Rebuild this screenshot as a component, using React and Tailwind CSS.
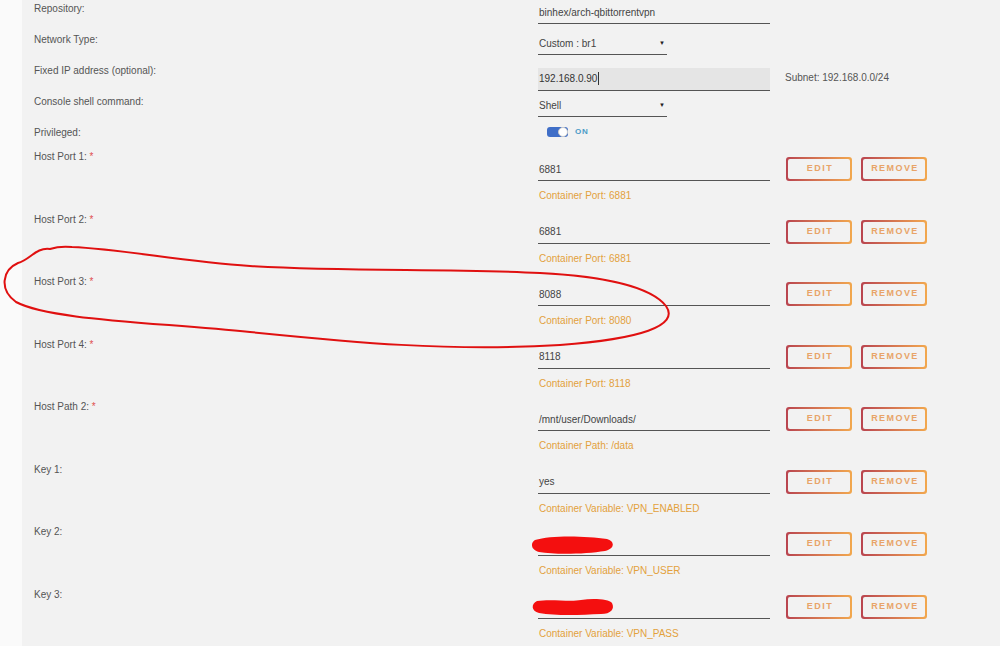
import React from "react";

const ports = [
  { label: "Host Port 1:", req: true, value: "6881", note: "Container Port: 6881" },
  { label: "Host Port 2:", req: true, value: "6881", note: "Container Port: 6881" },
  { label: "Host Port 3:", req: true, value: "8088", note: "Container Port: 8080" },
  { label: "Host Port 4:", req: true, value: "8118", note: "Container Port: 8118" },
  { label: "Host Path 2:", req: true, value: "/mnt/user/Downloads/", note: "Container Path: /data" },
  { label: "Key 1:", value: "yes", note: "Container Variable: VPN_ENABLED" },
  { label: "Key 2:", value: "", note: "Container Variable: VPN_USER", blot: 1 },
  { label: "Key 3:", value: "", note: "Container Variable: VPN_PASS", blot: 2 },
];

function GradButton({ children }) {
  return (
    <div className="h-[24px] w-[66px] rounded-[3px] bg-gradient-to-r from-[#b9444f] to-[#f2a84e] p-[2px]">
      <div className="flex h-full w-full items-center justify-center rounded-[2px] bg-[#f2f2f2] pl-[2px] text-[9px] font-bold tracking-[0.16em] text-[#e8a468]">
        {children}
      </div>
    </div>
  );
}

function Label({ children, req }) {
  return (
    <div className="w-[504px] shrink-0 text-[10px] leading-[14px] text-[#555]">
      {children}
      {req && <span className="text-[#e05050]"> *</span>}
    </div>
  );
}

function Blot({ kind }) {
  // red marker scribble covering the secret values
  return (
    <svg width="84" height="22" viewBox="0 0 84 22" className="absolute left-[-7px] top-[1px]">
      {kind === 1 ? (
        <path d="M4 6 C 20 1, 55 2, 76 5 C 84 7, 84 15, 74 17 C 55 20, 25 21, 8 18 C 0 16, -1 9, 4 6 Z" fill="#f40f0f" />
      ) : (
        <path d="M6 4 C 20 2, 40 5, 50 3 C 62 1, 78 2, 81 6 C 84 12, 80 17, 70 17 C 50 18, 25 19, 8 16 C 0 14, 0 7, 6 4 Z" fill="#f40f0f" />
      )}
    </svg>
  );
}

function PortRow({ row }) {
  return (
    <div className="flex h-[62.5px]">
      <Label req={row.req}>{row.label}</Label>
      <div className="flex flex-col">
        <div className="mt-[8px] flex items-start">
          <div className="relative flex h-[23px] w-[232px] items-center border-b border-[#555] pl-[1px] text-[10px] text-[#444]">
            {row.value}
            {row.blot && <Blot kind={row.blot} />}
          </div>
          <div className="ml-[16px] mt-[-1px] flex gap-[9px]">
            <GradButton>EDIT</GradButton>
            <GradButton>REMOVE</GradButton>
          </div>
        </div>
        <div className="mt-[8px] pl-[1px] text-[10px] leading-[14px] text-[#e3a13c]">{row.note}</div>
      </div>
    </div>
  );
}

export default function App() {
  return (
    <div className="relative flex h-[646px] w-full overflow-hidden bg-[#fafafa] font-['Liberation_Sans',Arial,sans-serif]">
      <div className="ml-[22px] flex-1 bg-[#f2f2f2] pl-[12px] pt-[2px]">
        {/* Repository */}
        <div className="flex h-[31px]">
          <Label>Repository:</Label>
          <div className="mt-[-1px] flex h-[23px] w-[232px] items-center border-b border-[#555] pl-[1px] text-[10px] text-[#444]">
            binhex/arch-qbittorrentvpn
          </div>
        </div>
        {/* Network type */}
        <div className="flex h-[31px]">
          <Label>Network Type:</Label>
          <div className="flex h-[22px] w-[129px] items-center justify-between border-b border-[#555] pl-[1px] pr-[2px] text-[10px] text-[#444]">
            <span>Custom : br1</span>
            <span className="text-[6px] text-[#222]">▼</span>
          </div>
        </div>
        {/* Fixed IP */}
        <div className="flex h-[31px]">
          <Label>Fixed IP address (optional):</Label>
          <div className="mt-[-1px] flex items-center">
            <div className="flex h-[23px] w-[232px] items-center border-b border-[#555] bg-[#e5e5e5] pl-[1px] text-[10px] text-[#333]">
              192.168.0.90<span className="ml-[1px] inline-block h-[13px] w-px bg-[#333]" />
            </div>
            <div className="ml-[15px] mt-[-3px] text-[10px] text-[#555]">Subnet: 192.168.0.0/24</div>
          </div>
        </div>
        {/* Console */}
        <div className="flex h-[31px]">
          <Label>Console shell command:</Label>
          <div className="flex h-[22px] w-[129px] items-center justify-between border-b border-[#555] pl-[1px] pr-[2px] text-[10px] text-[#444]">
            <span>Shell</span>
            <span className="text-[6px] text-[#222]">▼</span>
          </div>
        </div>
        {/* Privileged */}
        <div className="flex h-[24px]">
          <Label>Privileged:</Label>
          <div className="ml-[9px] mt-[1px] flex h-[10px] items-center">
            <div className="relative h-[10px] w-[21px] rounded-[3px] bg-[#3f6ec7]">
              <div className="absolute right-0 top-0 h-[10px] w-[10px] rounded-full border border-[#ccc] bg-white" />
            </div>
            <span className="ml-[7px] text-[8px] font-bold tracking-[0.1em] text-[#4a9bc7]">ON</span>
          </div>
        </div>
        {ports.map((row, i) => (
          <PortRow key={i} row={row} />
        ))}
      </div>

      {/* hand-drawn annotation around Host Port 3 */}
      <svg className="pointer-events-none absolute left-0 top-0" width="1000" height="646" viewBox="0 0 1000 646">
        <path
          d="M 50 249 C 36 247, 30 260, 18 263 C 2 270, -1 290, 16 302 C 50 320, 150 322, 250 332 C 350 342, 450 352, 560 345 C 640 339, 680 326, 666 306 C 650 286, 600 276, 540 273 C 450 268, 350 272, 250 266 C 180 261, 120 249, 72 247 C 62 246, 56 247, 50 249 Z"
          fill="none"
          stroke="#e01010"
          strokeWidth="2"
        />
      </svg>
    </div>
  );
}
